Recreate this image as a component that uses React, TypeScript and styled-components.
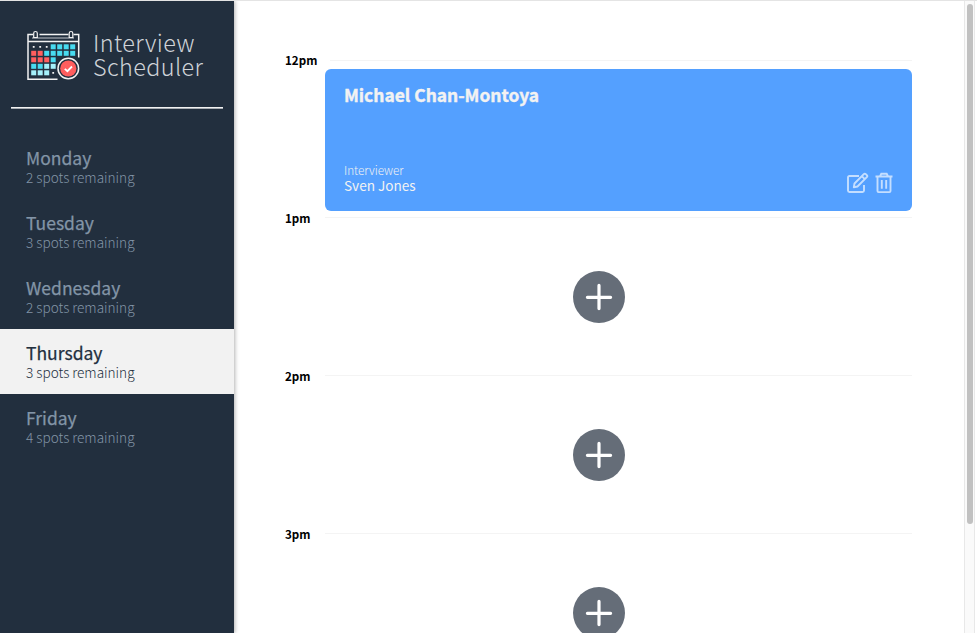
import React from "react";
import styled, { createGlobalStyle } from "styled-components";

const GlobalStyle = createGlobalStyle`
  * { box-sizing: border-box; }
  body {
    margin: 0;
    background: #fff;
    overflow: hidden;
    font-family: "Noto Sans CJK SC", "Open Sans", sans-serif;
  }
`;

const Page = styled.main`
  display: flex;
  width: 977px;
  height: 633px;
  border-top: 1px solid #e4e4e4;
  overflow: hidden;
`;

const Sidebar = styled.aside`
  position: relative;
  flex: 0 0 234px;
  height: 100%;
  background: #222f3e;
  box-shadow: 1px 0 4px rgba(0, 0, 0, 0.3);
`;

const Brand = styled.header`
  display: flex;
  align-items: flex-start;
  height: 106px;
  padding: 29px 0 0 27px;
`;

const BrandName = styled.div`
  margin: 0 0 0 12px;
  color: #cfd3d8;
  font-size: 23.4px;
  font-weight: 300;
  line-height: 24px;
  letter-spacing: 0.4px;
  white-space: nowrap;
`;

const Divider = styled.hr`
  height: 2px;
  margin: 0 11px 25px;
  border: 0;
  background: linear-gradient(#f2f2f2 50%, #a8adb3 50%);
`;

const Day = styled.li<{ $selected?: boolean }>`
  height: 65px;
  padding: 12px 26px;
  color: ${(p) => (p.$selected ? "#222f3e" : "#8395a7")};
  background: ${(p) => (p.$selected ? "#f2f2f2" : "transparent")};
`;

const DayList = styled.ul`
  margin: 0;
  padding: 0;
  list-style: none;
`;

const DayName = styled.div`
  font-size: 17.5px;
  font-weight: 400;
  line-height: 23px;
  -webkit-text-stroke: 0.25px currentColor;
`;

const Spots = styled.div`
  font-size: 13.6px;
  font-weight: 300;
  line-height: 16px;
`;

const Schedule = styled.section`
  flex: 1;
  height: 100%;
  padding: 52px 52px 0 51px;
  overflow: hidden;
`;

const Hour = styled.article`
  height: 158px;
`;

const HourHeader = styled.header<{ $inset?: boolean }>`
  display: flex;
  height: 16px;
  align-items: center;
  justify-content: space-between;

  &::after {
    content: "";
    width: ${(p) => (p.$inset ? 582 : 587)}px;
    height: 1px;
    margin-bottom: ${(p) => (p.$inset ? 1 : 3)}px;
    background: #f4f4f4;
  }
`;

const Time = styled.h4`
  width: 0;
  margin: 0 0 2px;
  font-size: 11.6px;
  font-weight: 700;
  line-height: 16px;
  white-space: nowrap;
`;

const Card = styled.div`
  display: flex;
  flex-direction: column;
  justify-content: space-between;
  height: 142px;
  margin-left: 40px;
  padding: 13px 19px 17px;
  border-radius: 6px;
  background: #54a0ff;
  color: #f2f2f2;
`;

const Guest = styled.h2`
  margin: 0;
  font-size: 17.4px;
  font-weight: 700;
  line-height: 26px;
  -webkit-text-stroke: 0.4px #f2f2f2;
`;

const CardFooter = styled.div`
  display: flex;
  align-items: flex-end;
  justify-content: space-between;
`;

const Label = styled.div`
  font-size: 11.7px;
  font-weight: 300;
  line-height: 15px;
`;

const Interviewer = styled.div`
  font-size: 13.6px;
  font-weight: 400;
  line-height: 17px;
`;

const Actions = styled.div`
  display: flex;
  gap: 6px;
  height: 22px;
  opacity: 0.66;
`;

const Empty = styled.div`
  display: flex;
  height: 142px;
  align-items: center;
  justify-content: center;
  padding-bottom: 2px;
`;

const AddButton = styled.button`
  display: block;
  width: 52px;
  height: 52px;
  padding: 0;
  border: 0;
  border-radius: 50%;
  background: #656d78;

  svg { display: block; }
`;

const ScrollTrack = styled.div`
  flex: 0 0 11px;
  margin-right: 2px;
  padding: 3px 1px 0 2px;
  border: solid #e8e8e8;
  border-width: 0 1px;
  background: #fafafa;
`;

const ScrollThumb = styled.div`
  width: 6px;
  height: 520px;
  border-radius: 3px;
  background: #c1c1c1;
`;

const CYAN = "#48dbf0";
const PALE = "#a5f0fa";
const RED = "#ff5e5e";

const CELL_ROWS: (string | null)[][] = [
  [null, null, null, CYAN, CYAN, CYAN, CYAN],
  [RED, RED, CYAN, CYAN, CYAN, CYAN, CYAN],
  [RED, RED, RED, CYAN],
  [CYAN, CYAN, PALE, PALE],
  [PALE, PALE, PALE],
];

const CalendarLogo = () => (
  <svg width="54" height="51" viewBox="0 0 54 51" fill="none">
    <path d="M6 4.5H1v44.8h29.5M12.5 4.5h29M46.5 4.5h5.2v23M1 11.4h50.7" stroke="#f2f2f2" strokeWidth="1.5" />
    <path d="M5 8h42" stroke="#c3c8cd" strokeWidth="1" />
    <path d="M6.7 7.5V3.3a1.8 1.8 0 0 1 3.6 0V7.5zM42.2 7.5V3.3a1.8 1.8 0 0 1 3.6 0V7.5z" fill="#222f3e" stroke="#f2f2f2" strokeWidth="1.2" />
    <path d="M5.8 16.8h1.8M12.3 16.8h1.8M18.8 16.8h1.8M25.3 42.8h1.8" stroke="#f2f2f2" strokeWidth="1.8" />
    {CELL_ROWS.flatMap((row, r) =>
      row.map((fill, c) =>
        fill ? (
          <rect key={`${r}-${c}`} x={4.2 + c * 6.5} y={14.3 + r * 6.5} width="5" height="5" fill={fill} />
        ) : null,
      ),
    )}
    <circle cx="41.3" cy="38.5" r="12" fill="#222f3e" />
    <circle cx="41.3" cy="38.5" r="10.3" stroke="#f2f2f2" strokeWidth="1.5" />
    <circle cx="41.3" cy="38.5" r="8.1" fill="#ff5e5e" />
    <path d="m37.8 38.8 2.6 2.4 4.6-4.7" stroke="#fff" strokeWidth="1.8" />
  </svg>
);

const EditIcon = () => (
  <svg width="22" height="22" viewBox="0 0 22 22" fill="none" stroke="#fff" strokeWidth="1.9" strokeLinejoin="round">
    <path d="M12 4H2.5Q1 4 1 5.5v13Q1 20 2.5 20h13Q17 20 17 18.5V13" />
    <path d="m7.5 11.5 9.3-9.3q1-1 2 0l1 1q1 1 0 2l-9.3 9.3-3.7.7zM14.8 4.2l3 3" />
  </svg>
);

const TrashIcon = () => (
  <svg width="18" height="22" viewBox="0 0 18 22" fill="none" stroke="#fff" strokeWidth="1.9">
    <path d="M.5 4.5h17M2.5 4.5V19q0 1.1 1.1 1.1h10.8q1.1 0 1.1-1.1V4.5M5 4.2l1.3-2.4h5.4L13 4.2M6.8 8v8.8M11.2 8v8.8" />
  </svg>
);

const PlusIcon = () => (
  <svg width="52" height="52" viewBox="0 0 52 52" fill="none" stroke="#fff" strokeWidth="3.2" strokeLinecap="round">
    <path d="M26 14.4v23.2M14.4 26.3h23.2" />
  </svg>
);

const DAYS = [
  { name: "Monday", spots: 2 },
  { name: "Tuesday", spots: 3 },
  { name: "Wednesday", spots: 2 },
  { name: "Thursday", spots: 3 },
  { name: "Friday", spots: 4 },
];

export default function App() {
  return (
    <>
      <GlobalStyle />
      <Page>
        <Sidebar>
          <Brand>
            <CalendarLogo />
            <BrandName>
              Interview
              <br />
              Scheduler
            </BrandName>
          </Brand>
          <Divider />
          <DayList>
            {DAYS.map((d) => (
              <Day key={d.name} $selected={d.name === "Thursday"}>
                <DayName>{d.name}</DayName>
                <Spots>{d.spots} spots remaining</Spots>
              </Day>
            ))}
          </DayList>
        </Sidebar>
        <Schedule>
          <Hour>
            <HourHeader $inset>
              <Time>12pm</Time>
            </HourHeader>
            <Card>
              <Guest>Michael Chan-Montoya</Guest>
              <CardFooter>
                <div>
                  <Label>Interviewer</Label>
                  <Interviewer>Sven Jones</Interviewer>
                </div>
                <Actions>
                  <EditIcon />
                  <TrashIcon />
                </Actions>
              </CardFooter>
            </Card>
          </Hour>
          {["1pm", "2pm", "3pm"].map((t) => (
            <Hour key={t}>
              <HourHeader>
                <Time>{t}</Time>
              </HourHeader>
              <Empty>
                <AddButton aria-label="Add">
                  <PlusIcon />
                </AddButton>
              </Empty>
            </Hour>
          ))}
        </Schedule>
        <ScrollTrack>
          <ScrollThumb />
        </ScrollTrack>
      </Page>
    </>
  );
}
